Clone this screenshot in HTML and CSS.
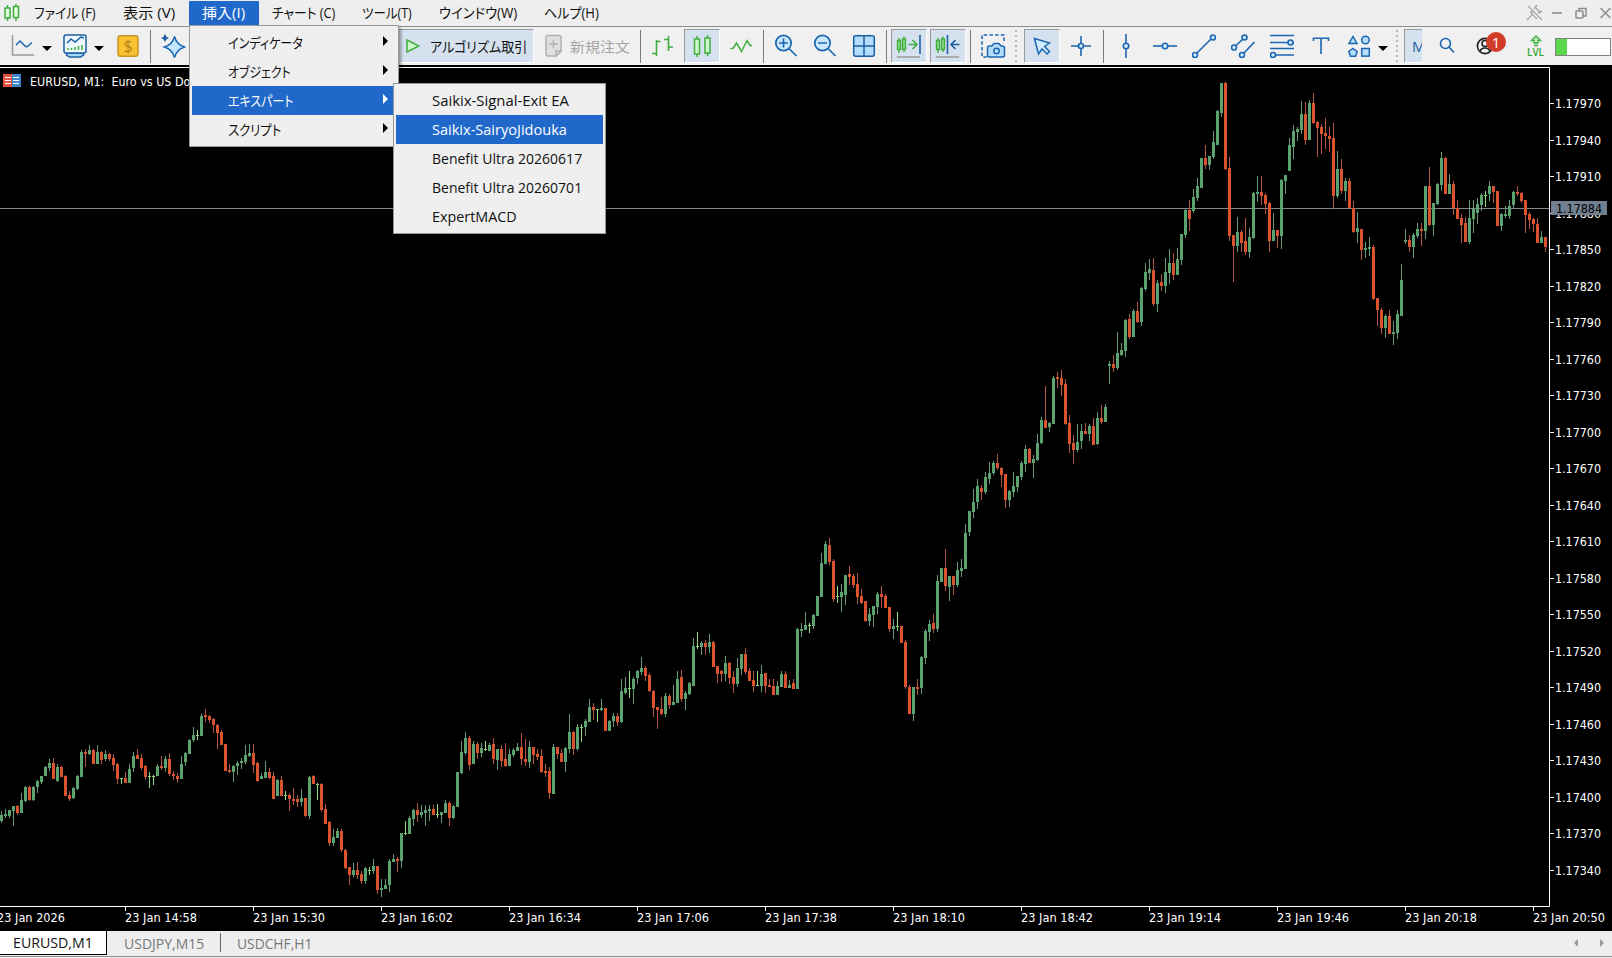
FILE: index.html
```html
<!DOCTYPE html>
<html lang="ja">
<head>
  <meta charset="UTF-8" />
  <title>EURUSD,M1</title>
  <link rel="stylesheet" href="styles.css">
</head>
<body>
  <div class="menubar">
    <svg class="logo" width="16" height="18" viewBox="0 0 16 18" fill="#e4fbe2" stroke="#3fae3f" stroke-width="1.5"><path d="M3.5 1v16M12 0v17"/><rect x="1" y="4" width="5" height="10"/><rect x="9.5" y="2.5" width="5" height="11"/></svg>
    <div class="menu" style="width:89px"><span class="fit" data-w="62">ファイル (F)</span></div>
    <div class="menu" style="width:66px"><span class="fit" data-w="52">表示 (V)</span></div>
    <div class="menu open"><span class="fit" data-w="43">挿入(I)</span></div>
    <div class="menu" style="width:90px"><span class="fit" data-w="63">チャート (C)</span></div>
    <div class="menu" style="width:77px"><span class="fit" data-w="50">ツール(T)</span></div>
    <div class="menu" style="width:105px"><span class="fit" data-w="78">ウインドウ(W)</span></div>
    <div class="menu"><span class="fit" data-w="55">ヘルプ(H)</span></div>
    <svg class="winbtns" width="86" height="20" viewBox="0 0 86 20" fill="none" stroke="#8f8f8f" stroke-width="1.6">
      <g stroke="#a8a8a8" stroke-width="1.4"><path d="M2 3l14 14M1 17l5-5M4 9l7 7M5 9l3-1M9 4l6 6M8 6l3-4M12 10l4-2"/></g>
      <path d="M26 10h10"/><rect x="50" y="8" width="7" height="7" rx="1"/><path d="M53 8V5.500h7V13h-3"/><path d="M74.500 5l10 10M84.500 5l-10 10"/>
    </svg>
  </div>

  <div class="toolbar">
    <div class="cell drop first">
      <svg width="24" height="24" viewBox="0 0 24 24" fill="none"><path d="M1.500 1v20H23" stroke="#9a9a9a" stroke-width="1.500"/><path d="M5 11l4-4 5 5q1.500 1.500 3 0l4-3.500" stroke="#1c66b0" stroke-width="1.500"/></svg>
      <i class="arrow"></i>
    </div>
    <div class="cell drop">
      <svg width="24" height="24" viewBox="0 0 24 24" fill="none" stroke="#1c5fa0" stroke-width="1.500"><path d="M3.500 19h17v2l-3 2h-11l-3-2z" fill="#a9d8f7"/><rect x="1" y="1" width="22" height="18" rx="2" fill="#eef8ff"/><path d="M4 9l4-4 4 3 6-5 3 1"/><path d="M5 16v-2M8.500 16v-2M12 16v-3M15.500 16v-4M19 16v-5" stroke="#3fae3f"/></svg>
      <i class="arrow"></i>
    </div>
    <div class="cell"><svg width="24" height="24" viewBox="0 0 24 24"><rect x="2" y="1.700" width="20" height="20.500" rx="2.500" fill="#f7c331" stroke="#c8962a" stroke-width="1.500"/><text class="dollar" x="12" y="17.500">$</text></svg></div>
    <div class="sep"></div>
    <div class="cell"><svg width="26" height="26" viewBox="0 0 26 26" fill="#c3e6ff" stroke="#1c66b0" stroke-width="1.500"><path d="M14.500 3.500q2 8 10 10.500-8 2.500-10 10.500-2-8-10-10.500 8-2.500 10-10.500z"/><path d="M5 1q.8 3.200 4 4-3.200.8-4 4-.8-3.200-4-4 3.200-.8 4-4z" fill="#1c5fa0" stroke="none"/></svg></div>
    <div class="cell algo on">
      <svg width="14" height="16" viewBox="0 0 14 16"><path d="M1 2l12 6-12 6z" fill="#d2f7cf" stroke="#3fae3f" stroke-width="1.500"/></svg>
      <span class="fit" data-w="97">アルゴリズム取引</span>
    </div>
    <div class="cell order">
      <svg width="18" height="24" viewBox="0 0 18 24" fill="#e0e0e0" stroke="#b0b0b0" stroke-width="1.500"><path d="M3 1.500h11q2 0 2 2V17l-5 5H3q-2 0-2-2V3.500q0-2 2-2z"/><path d="M11 22v-5h5zM4 10h9M8.500 5.500v9"/></svg>
      <span class="fit" data-w="60">新規注文</span>
    </div>
    <div class="sep"></div>
    <div class="cell"><svg width="24" height="24" viewBox="0 0 24 24" fill="none" stroke="#3fae3f" stroke-width="1.600"><path d="M1 19.500h4M5.500 22V6M5.500 7.500h4M13 5.500h4M17.500 2v15M17.500 13h4.500"/></svg></div>
    <div class="cell on"><svg width="24" height="24" viewBox="0 0 24 24" fill="#d2f7cf" stroke="#3fae3f" stroke-width="1.500"><path d="M7 2v21M17.500 1v21"/><rect x="4.500" y="5" width="5" height="15"/><rect x="15" y="4" width="5" height="15"/></svg></div>
    <div class="cell"><svg width="24" height="24" viewBox="0 0 24 24" fill="none" stroke="#3fae3f" stroke-width="1.500"><path d="M1.500 14.500H4l3.500-5.500 5 8.500 5.500-11 3 5h2"/></svg></div>
    <div class="sep"></div>
    <div class="cell"><svg width="24" height="24" viewBox="0 0 24 24" fill="#c9e8fc" stroke="#1c66b0" stroke-width="1.700"><circle cx="9.500" cy="9" r="7.700"/><path d="M15 14.500l7.500 7.500M5 9h9M9.500 4.500v9"/></svg></div>
    <div class="cell"><svg width="24" height="24" viewBox="0 0 24 24" fill="#c9e8fc" stroke="#1c66b0" stroke-width="1.700"><circle cx="9.500" cy="9" r="7.700"/><path d="M15 14.500l7.500 7.500M5 9h9"/></svg></div>
    <div class="cell"><svg width="24" height="24" viewBox="0 0 24 24" fill="#b5defc" stroke="#1c5fa0" stroke-width="1.500"><rect x="1.700" y="1.700" width="20.600" height="20.600" rx="2"/><path d="M12 2v20M2 12h20"/></svg></div>
    <div class="sep"></div>
    <div class="cell on"><svg width="26" height="24" viewBox="0 0 26 24" fill="#8fd98b" stroke="#3fae3f" stroke-width="1.400"><path d="M3 4v15M8 2.500V18"/><rect x="1.500" y="6.500" width="3" height="9"/><rect x="6.500" y="5" width="3" height="10.500"/><path d="M12.500 10.500h8M16.500 6l4.500 4.500-4.500 4.500" fill="none" stroke-width="1.600"/><path d="M24 1v19" stroke="#1c5fa0" stroke-width="1.600"/><path d="M1 23h23" stroke="#999"/></svg></div>
    <div class="cell on"><svg width="26" height="24" viewBox="0 0 26 24" fill="#8fd98b" stroke="#3fae3f" stroke-width="1.400"><path d="M3 4v15M8 2.500V18"/><rect x="1.500" y="6.500" width="3" height="9"/><rect x="6.500" y="5" width="3" height="10.500"/><path d="M24.500 10.500h-8M20.500 6L16 10.500l4.500 4.500M12.500 1v19" fill="none" stroke="#1c5fa0" stroke-width="1.600"/><path d="M1 23h23" stroke="#999"/></svg></div>
    <div class="sep"></div>
    <div class="cell"><svg width="26" height="26" viewBox="0 0 26 26" fill="none" stroke="#1c66b0" stroke-width="1.500"><path d="M24 8V2H2v22h5" stroke-dasharray="3.500 2.200"/><path d="M9.500 13H12l2-2.500h5l2 2.500h1.500q2 0 2 2v7q0 2-2 2h-13q-2 0-2-2v-7q0-2 2-2z" fill="#b5defc"/><circle cx="16.500" cy="18" r="2.700"/></svg></div>
    <div class="grip"></div>
    <div class="cell on"><svg width="24" height="24" viewBox="0 0 24 24" fill="#d3ecff" stroke="#1c66b0" stroke-width="1.500"><path d="M4.500 4.500l15 4.500-5 3.500 5 5-2.500 2.500-5-5-3.500 5z"/></svg></div>
    <div class="cell"><svg width="24" height="24" viewBox="0 0 24 24" fill="#d3ecff" stroke="#1c66b0" stroke-width="1.600"><path d="M12 2v20M2 12h20"/><circle cx="12" cy="12" r="2.500"/></svg></div>
    <div class="sep"></div>
    <div class="cell"><svg width="24" height="24" viewBox="0 0 24 24" fill="#d3ecff" stroke="#1c66b0" stroke-width="1.600"><path d="M12 0v24"/><circle cx="12" cy="12" r="2.700"/></svg></div>
    <div class="cell"><svg width="24" height="24" viewBox="0 0 24 24" fill="#d3ecff" stroke="#1c66b0" stroke-width="1.600"><path d="M0 12h24"/><circle cx="12" cy="12" r="2.700"/></svg></div>
    <div class="cell"><svg width="24" height="24" viewBox="0 0 24 24" fill="#d3ecff" stroke="#1c66b0" stroke-width="1.600"><path d="M3 21L21 3"/><circle cx="3" cy="21" r="2.500"/><circle cx="21" cy="3.500" r="2.500"/></svg></div>
    <div class="cell"><svg width="24" height="24" viewBox="0 0 24 24" fill="#d3ecff" stroke="#1c66b0" stroke-width="1.600"><path d="M3 13.500L13.500 3.500M11 21L23.500 8"/><circle cx="3" cy="13.500" r="2.500"/><circle cx="13.500" cy="3.500" r="2.500"/><circle cx="11" cy="21" r="2.500"/></svg></div>
    <div class="cell"><svg width="24" height="24" viewBox="0 0 24 24" fill="#d3ecff" stroke="#1c66b0" stroke-width="1.600"><path d="M0 1.500h24M0 8.500h24M0 14.500h24M0 21h24"/><circle cx="20.500" cy="8.500" r="2.500"/><circle cx="3" cy="21" r="2.500"/></svg></div>
    <div class="cell"><svg width="24" height="24" viewBox="0 0 24 24" fill="none" stroke="#1c66b0" stroke-width="1.600"><path d="M4.500 7V4.300h15V7M12 4v16"/></svg></div>
    <div class="cell drop shapes">
      <svg width="24" height="24" viewBox="0 0 24 24" fill="#b5defc" stroke="#1c66b0" stroke-width="1.500"><path d="M6 2.500l4 7H2z"/><circle cx="18.500" cy="6" r="3.800"/><path d="M6 14.500l4.200 3-1.600 4.700H3.400L1.800 17.500z"/><rect x="14.700" y="14.500" width="7.600" height="7.600"/></svg>
      <i class="arrow"></i>
    </div>
    <div class="grip"></div>
    <div class="cell on tf">M</div>
    <svg class="search" width="16" height="18" viewBox="0 0 16 18" fill="none" stroke="#1c66b0" stroke-width="1.600"><circle cx="6.500" cy="6.500" r="5"/><path d="M10 10l5 5.500"/></svg>
    <div class="user">
      <svg width="18" height="18" viewBox="0 0 18 18" fill="none" stroke="#222" stroke-width="1.600"><circle cx="9" cy="9" r="7.600"/><circle cx="9" cy="6.500" r="3"/><path d="M4 14.500q1-3.500 5-3.500t5 3.500"/></svg>
      <b>1</b>
    </div>
    <div class="lvl">
      <svg width="12" height="12" viewBox="0 0 12 12" fill="#c7f2c3" stroke="#3fae3f" stroke-width="1.400"><path d="M6 1l4.500 4.500H8V8H4V5.500H1.500zM4 10.500h4"/></svg>
      <span>LVL</span>
    </div>
    <div class="meter"><i></i></div>
  </div>

  <div class="chart">
    <svg id="plot" width="1612" height="866" viewBox="0 65 1612 866"></svg>
  </div>

  <div class="tabs">
    <div class="tab active"><span class="fit" data-w="80">EURUSD,M1</span></div>
    <div class="tab"><span class="fit" data-w="80">USDJPY,M15</span></div>
    <div class="tab last"><span class="fit" data-w="75">USDCHF,H1</span></div>
    <svg class="scroll" width="31" height="8" viewBox="0 0 31 8" fill="#999"><path d="M4 0v8L0 4zM26 0v8l4-4z"/></svg>
  </div>

  <div class="popup insert">
    <div class="item"><span class="fit" data-w="75">インディケータ</span><i></i></div>
    <div class="item"><span class="fit" data-w="63">オブジェクト</span><i></i></div>
    <div class="item sel"><span class="fit" data-w="65">エキスパート</span><i></i></div>
    <div class="item"><span class="fit" data-w="53">スクリプト</span><i></i></div>
  </div>
  <div class="popup experts">
    <div class="item"><span class="fit" data-w="137">Saikix-Signal-Exit EA</span></div>
    <div class="item sel"><span class="fit" data-w="135">Saikix-SairyoJidouka</span></div>
    <div class="item"><span class="fit" data-w="150">Benefit Ultra 20260617</span></div>
    <div class="item"><span class="fit" data-w="150">Benefit Ultra 20260701</span></div>
    <div class="item"><span class="fit" data-w="85">ExpertMACD</span></div>
  </div>

  <script src="script.js"></script>
</body>
</html>
```

FILE: styles.css
```css
* {
  box-sizing: border-box;
}
body {
  margin: 0;
  width: 1612px;
  height: 958px;
  overflow: hidden;
  background: #eeeeee;
  color: #111;
  font-family: "Open Sans", "Noto Sans CJK JP", sans-serif;
  font-size: 14px;
  display: flex;
  flex-direction: column;
}
svg {
  display: block;
  flex: none;
}
.fit {
  display: inline-block;
  white-space: pre;
  transform-origin: 0 50%;
  font-feature-settings: "palt";
}

/* menu bar */
.menubar {
  height: 27px;
  flex: none;
  display: flex;
  align-items: center;
  border-bottom: 1px solid #8c8c8c;
}
.logo {
  margin: 0 14px 0 4px;
}
.menu {
  flex: none;
  height: 25px;
  line-height: 24px;
  white-space: nowrap;
}
.menu.open {
  width: 70px;
  margin-right: 13px;
  padding-left: 13px;
  background: #2069cb;
  color: #fff;
}
.winbtns {
  margin-left: auto;
}

/* toolbar */
.toolbar {
  height: 38px;
  flex: none;
  display: flex;
  align-items: center;
  gap: 3px;
  padding-left: 5px;
  background: #f0f0f0;
}
.cell {
  width: 36px;
  height: 34px;
  flex: none;
  display: flex;
  align-items: center;
  justify-content: center;
}
.cell.on {
  background: #d5e1ef;
  border: 1px solid;
  border-color: #9a9a9a #fff #fff #9a9a9a;
}
.cell.drop {
  width: 50px;
  justify-content: flex-start;
  padding-left: 6px;
  gap: 7px;
}
.cell.drop.first {
  width: 49px;
}
.cell.shapes {
  padding-left: 5px;
}
.arrow {
  border: 5px solid transparent;
  border-top-color: #000;
  border-bottom: 0;
  margin-top: 5px;
}
.dollar {
  font: 400 16px "Open Sans", sans-serif;
  fill: #b8801c;
  text-anchor: middle;
}
.cell.algo {
  width: 139px;
  margin-left: 201px;
  margin-right: -1px;
  justify-content: flex-start;
  padding-left: 10px;
  gap: 10px;
  white-space: nowrap;
}
.cell.order {
  width: 100px;
  justify-content: flex-start;
  padding-left: 9px;
  gap: 7px;
  color: #a5a5a5;
  white-space: nowrap;
}
.sep {
  width: 3px;
  height: 33px;
  flex: none;
  border-left: 1px solid transparent;
  background: linear-gradient(90deg, #7a7a7a 1px, transparent 1px) padding-box;
}
.grip {
  width: 7px;
  height: 34px;
  flex: none;
  background: radial-gradient(circle at 2px 2px, #b5b5b5 1.1px, transparent 1.4px) 0 0 / 7px 5px;
}
.cell.tf {
  width: 18px;
  margin-left: -1px;
  padding-left: 7px;
  justify-content: flex-start;
  overflow: hidden;
  border-right: 0;
  color: #1c5fa0;
  font-size: 15px;
}
.search {
  margin-left: 14px;
}
.user {
  position: relative;
  margin-left: 18px;
  width: 28px;
}
.user b {
  position: absolute;
  left: 10px;
  top: -5px;
  width: 20px;
  height: 20px;
  border-radius: 50%;
  background: #d03c26;
  color: #fff;
  font-size: 15px;
  font-weight: 400;
  line-height: 20px;
  text-align: center;
}
.lvl {
  margin-left: 20px;
  width: 17px;
  display: flex;
  flex-direction: column;
  align-items: center;
  color: #35a435;
  font-size: 10px;
  font-weight: 600;
  line-height: 10px;
}
.meter {
  width: 56px;
  height: 18px;
  margin-left: 8px;
  margin-top: 2px;
  border: 1px solid #808080;
  background: #fff;
  flex: none;
}
.meter i {
  display: block;
  width: 11px;
  height: 16px;
  background: #5cd64b;
}

/* chart */
.chart {
  height: 866px;
  flex: none;
  background: #000;
}
#plot text {
  font: 12px "DejaVu Sans Condensed", "DejaVu Sans", sans-serif;
  font-stretch: condensed;
  fill: #fff;
  white-space: pre;
}
#plot text.now {
  fill: #000;
}
.frame {
  fill: none;
  stroke: #fff;
}
.g { fill: #5aa36f; }
.r { fill: #d9532f; }
.d { fill: #8fdc78; }
.gw { fill: #659a72; }
.rw { fill: #b0563f; }

/* chart tabs */
.tabs {
  height: 26px;
  flex: none;
  display: flex;
  align-items: flex-start;
  border-bottom: 1px solid #909090;
}
.tab {
  height: 24px;
  width: 114px;
  padding-left: 17px;
  line-height: 25px;
  color: #777;
  white-space: nowrap;
  background: linear-gradient(#666, #666) 113px 2px / 1px 19px no-repeat;
}
.tab.active {
  width: 107px;
  padding-left: 13px;
  line-height: 23px;
  background: #fff;
  color: #111;
  border: solid #000;
  border-width: 0 1px 1px 0;
}
.tab.last {
  background: none;
  padding-left: 16px;
}
.scroll {
  margin: 8px 7px 0 auto;
}

/* popups lie over the toolbar and chart */
.popup {
  position: absolute;
  padding: 2px;
  background: #efefef;
  border: 1px solid #999;
}
.insert {
  left: 189px;
  top: 25px;
  width: 210px;
  height: 122px;
  box-shadow: 2px 3px 3px rgba(0, 0, 0, 0.4);
}
.experts {
  left: 393px;
  top: 83px;
  width: 213px;
  height: 151px;
}
.item {
  height: 29px;
  line-height: 28px;
  padding-left: 36px;
  display: flex;
  justify-content: space-between;
  align-items: center;
  white-space: nowrap;
}
.item i {
  border: 5px solid transparent;
  border-left-color: #000;
  border-right: 0;
  margin: -4px 8px 0 0;
}
.item.sel {
  background: #2069cb;
  color: #fff;
}
.item.sel i {
  border-left-color: #fff;
}
```

FILE: script.js
```js
// one candle per entry: colour, high, open/close top, open/close bottom, low (in plot pixels)
const candles = `
g811,815,821,823 g809,814,816,818 g810,810,816,818 g806,806,811,826 r805,806,813,815 g793,800,813,813 g786,787,801,802 r786,787,800,801
g786,787,800,801 g780,781,787,793 g776,776,782,784 g766,767,776,776 g759,763,768,771 r758,763,779,779 g764,767,781,782 r766,767,777,777
r775,776,796,796 r791,795,799,801 g787,788,798,799 g775,776,789,790 g750,752,777,777 r749,752,754,767 g745,750,754,755 r749,750,764,764
g745,752,764,764 r751,752,760,764 g750,754,759,761 r753,754,759,761 r754,758,765,771 r763,764,779,784 d778,778,779,784 r772,778,783,783
g764,769,783,783 g752,756,768,772 r749,755,759,759 r754,758,768,770 r765,766,777,780 d772,776,777,788 d775,776,777,785 g764,766,776,776
r756,766,768,770 g756,759,768,772 r753,759,774,776 r771,774,776,780 r773,776,779,783 g756,764,779,779 g752,753,762,766 g739,740,754,754
g727,735,740,742 d730,735,736,740 g714,716,736,736 r709,715,717,722 r715,716,720,723 r718,719,725,733 r724,725,733,749 r730,732,745,745
r744,744,771,771 r764,770,772,773 g765,766,772,782 g761,763,766,775 g758,761,763,769 g745,755,762,764 g744,753,756,757 r744,753,765,773
r762,763,781,782 g773,776,779,779 g761,772,778,778 r768,772,778,779 r772,776,799,799 g779,780,796,796 r776,780,796,796 d791,795,796,800
r793,795,799,811 r788,799,801,805 r795,799,802,807 g789,798,802,806 r798,798,816,817 g776,777,816,819 r775,776,784,784 d783,784,785,800
r783,784,810,812 r804,809,824,824 r821,822,843,846 g829,837,843,846 g828,831,838,838 r829,831,850,852 r849,850,868,869 r867,867,875,885
g863,870,875,877 r862,870,875,879 r871,874,881,884 g867,868,881,884 d867,870,871,875 g859,866,871,874 r866,866,890,894 g879,888,890,897
g879,885,889,889 g859,861,885,892 g854,859,862,862 r857,859,861,872 g833,833,861,868 d821,833,834,835 g816,818,834,834 g809,810,819,826
r803,810,815,822 g805,812,815,818 g805,810,813,826 g805,809,811,821 r805,809,815,815 d804,814,815,818 g812,812,815,823 g800,803,813,813
r801,803,818,826 g805,806,818,819 g772,772,807,807 g741,752,773,774 g732,738,753,755 r736,738,765,770 g741,744,764,764 r742,744,753,759
g743,748,753,757 d741,749,750,751 g743,745,751,751 r738,744,759,764 g749,749,760,770 r745,749,761,767 r743,759,766,767 g749,754,766,766
g748,750,755,757 g743,747,751,751 r733,747,759,765 r739,759,762,766 g741,747,762,768 r747,747,755,764 r749,754,757,760 r749,756,772,773
r764,771,773,777 r767,771,793,799 g744,747,794,794 r747,747,754,759 r749,753,762,762 g747,748,762,772 g714,732,749,753 r731,732,749,755
g724,727,749,751 d724,727,728,742 g719,721,727,736 g699,707,722,722 r703,707,710,720 d709,709,710,722 g699,708,710,711 r708,708,731,731
g720,721,731,731 g713,716,721,727 r713,716,722,726 g679,691,722,723 g677,688,693,694 d671,688,689,698 g677,679,689,704 g670,671,678,684
g657,668,672,675 r666,668,676,681 r673,675,691,692 r690,691,708,717 r707,707,710,729 r697,709,714,715 g693,696,714,717 r694,696,705,709
g685,702,705,705 g671,679,703,703 r670,677,699,702 g691,693,699,710 g682,683,694,695 g638,646,686,686 d632,646,647,649 g641,643,647,655
r640,643,647,655 g634,642,647,653 r641,642,667,667 r666,666,674,683 r670,671,674,682 g656,663,674,681 r662,663,678,684 r671,677,684,693
g658,668,684,687 g654,654,669,675 r648,654,672,674 r668,671,681,681 r671,680,686,692 d671,685,686,686 g665,674,686,692 r673,673,686,693
r679,685,687,687 r679,686,695,695 g681,686,695,695 g671,674,687,687 r671,674,688,688 g680,685,688,688 r679,683,689,689 g628,629,689,689
g623,629,631,637 g612,625,630,630 d623,625,626,633 g614,615,626,629 g596,596,616,616 g553,563,597,597 g541,544,564,564 r538,545,562,565
r559,561,599,602 d586,596,597,603 g584,592,597,612 g575,575,595,605 r566,574,577,585 r574,576,585,588 r573,584,597,604 r589,596,603,604
r601,601,621,622 g608,614,621,626 g606,606,615,627 g592,594,607,614 r586,594,597,608 r594,596,608,608 r607,607,629,632 g619,626,629,639
d612,626,627,631 r626,626,643,643 r640,642,687,689 r685,687,714,714 g687,687,714,721 r679,687,689,695 g656,657,688,694 g629,631,658,664
g620,624,632,641 r614,623,629,633 g575,581,629,632 g568,568,582,582 r549,568,586,591 g576,576,587,601 r576,576,585,595 g562,570,585,587
g559,568,571,577 g524,533,569,569 g511,511,532,536 g489,502,512,518 g479,486,502,509 r485,488,492,500 g472,477,492,494 g462,473,479,484
g461,463,473,475 r454,463,468,470 r467,468,475,487 r474,474,500,508 g490,491,500,507 g472,486,492,497 g476,476,487,492 g461,463,477,480
g445,449,464,472 r448,449,463,463 g455,459,463,478 g434,443,460,461 g417,420,443,444 r386,420,428,428 g422,423,427,432 g376,378,424,424
r372,377,379,388 r370,378,385,396 r379,384,424,425 r415,423,444,453 r435,443,450,464 g424,442,450,452 g424,431,441,449 r423,431,434,434
g424,426,434,441 r418,426,445,445 g412,418,444,445 r405,418,422,424 g404,407,422,422 g361,364,366,384 r355,364,368,372 g332,353,368,370
g343,350,355,356 g319,320,351,357 r314,319,337,339 g309,311,337,337 r302,311,322,323 g287,288,322,326 g263,272,289,291 g259,269,273,280
r258,270,304,306 g280,283,304,312 r274,282,286,291 g258,272,286,293 g249,263,273,284 r253,263,275,280 g248,259,275,275 g234,234,260,265
g209,210,235,238 r200,210,219,231 g189,197,211,213 g178,186,198,201 g158,158,188,188 r145,158,165,169 g156,156,165,170 g131,142,157,159
g110,111,145,145 g83,83,113,117 r82,83,169,170 r157,168,236,241 r235,235,246,282 g217,232,246,252 r230,232,243,252 r218,241,252,255
g228,237,252,258 g192,193,238,239 g176,192,194,202 r176,192,196,205 r193,195,204,214 r202,203,241,252 g213,230,241,241 r230,230,236,248
g179,180,236,249 g175,175,181,194 g138,145,171,171 g125,131,147,159 g127,129,132,141 g101,114,130,134 r102,114,140,145 g100,103,140,140
r93,103,123,124 r121,122,128,157 r124,127,134,154 r118,133,136,149 r127,136,139,152 r123,138,196,209 g151,169,196,198 r159,169,191,194
g178,181,191,201 r178,181,208,208 r201,208,232,233 g212,228,232,243 r229,229,250,260 g242,248,250,258 g237,247,249,256 r245,247,299,300
r298,298,310,326 r308,310,328,334 g314,316,328,338 r310,316,334,334 g321,332,334,345 g310,314,333,339 g264,280,316,316 g229,240,242,244
r235,240,247,252 g233,235,247,258 g223,229,236,238 r223,229,231,246 g186,186,231,239 r167,186,225,226 g203,203,225,236 g183,184,204,205
g152,158,185,191 r157,158,194,194 g174,184,194,194 r181,184,208,215 r200,208,219,219 r214,218,225,243 r217,223,242,242 g200,218,242,244
g200,209,219,233 g198,204,213,224 g193,195,205,211 d191,195,196,207 g181,186,194,201 r186,186,192,203 r191,191,226,226 g213,214,226,231
g206,214,216,218 g200,206,216,219 g191,192,205,208 r186,192,194,196 r192,193,201,203 r200,200,215,233 r212,214,220,229 r218,219,224,232
r218,224,243,243 g231,237,243,243 r237,237,247,252
`.trim().split(/\s+/);

const plot = document.getElementById('plot');
let out = '<rect x="0" y="208" width="1549" height="1" fill="#84878c"/>';

candles.forEach((c, i) => {
  const kind = c[0];
  const [high, top, bottom, low] = c.slice(1).split(',').map(Number);
  const x = i * 4;
  const wick = kind === 'd' ? 'd' : kind + 'w';
  out += `<rect class="${wick}" x="${x + 1}" y="${high}" width="1" height="${low - high}"/>`;
  out += `<rect class="${kind}" x="${x}" y="${top}" width="3" height="${bottom - top}"/>`;
});

out += '<path class="frame" d="M0 67.5H1549.5V906.5H0"/>';

// price scale
for (let i = 0; i < 22; i++) {
  const y = Math.round(103 + i * 36.5);
  const price = (1.1797 - i * 0.0003).toFixed(5);
  out += `<rect x="1550" y="${y}" width="4" height="1" fill="#fff"/>`;
  out += `<text x="1555" y="${y + 5}" textLength="46" lengthAdjust="spacingAndGlyphs">${price}</text>`;
}
out += '<rect x="1551" y="201" width="56" height="14" fill="#708090"/>';
out += '<text class="now" x="1556" y="213" textLength="46" lengthAdjust="spacingAndGlyphs">1.17884</text>';

// time scale
const times = ['14:58', '15:30', '16:02', '16:34', '17:06', '17:38', '18:10', '18:42', '19:14', '19:46', '20:18', '20:50'];
out += '<text x="-3" y="922" textLength="68" lengthAdjust="spacingAndGlyphs">23 Jan 2026</text>';
times.forEach((t, i) => {
  const x = 125 + i * 128;
  out += `<rect x="${x}" y="907" width="1" height="4" fill="#fff"/>`;
  out += `<text x="${x}" y="922" textLength="72" lengthAdjust="spacingAndGlyphs">23 Jan ${t}</text>`;
});

// chart title
out += '<rect x="3" y="74" width="9" height="13" fill="#e2523f"/><rect x="12" y="74" width="9" height="13" fill="#3c86d0"/>';
out += '<path d="M5 77.500h6M5 80.500h6M5 83.500h6M13 77.500h6M13 80.500h6M13 83.500h6" stroke="#fff"/>';
out += '<text x="30" y="86" textLength="268" lengthAdjust="spacingAndGlyphs">EURUSD, M1:  Euro vs US Dollar, 1 Minute Chart</text>';
plot.innerHTML = out;

// squeeze labels to their UI widths
document.querySelectorAll('.fit').forEach((el) => {
  el.style.transform = `scaleX(${el.dataset.w / el.offsetWidth})`;
});
```
